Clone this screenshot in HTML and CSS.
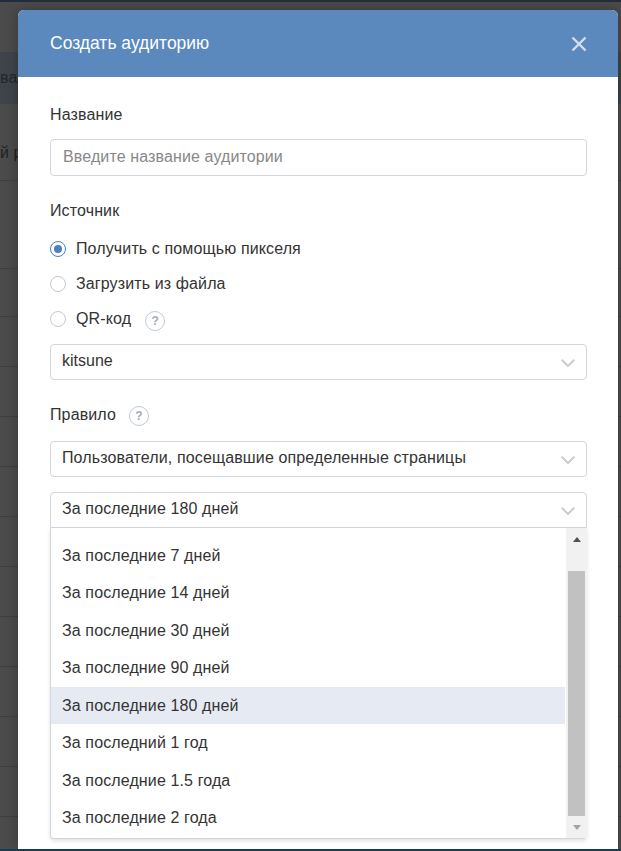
FILE: index.html
```html
<!DOCTYPE html>
<html lang="ru">
<head>
<meta charset="utf-8">
<title>Создать аудиторию</title>
<link rel="stylesheet" href="styles.css">
</head>
<body>
<div class="backdrop">
  <div class="bg-head"><span class="bg-head-text">ва</span></div>
  <div class="bg-row bg-row-first"><span>й р</span></div>
  <div class="bg-row bg-row-a"></div>
  <div class="bg-row bg-row-b"></div>
  <div class="bg-row"></div><div class="bg-row"></div><div class="bg-row"></div>
  <div class="bg-row"></div><div class="bg-row"></div><div class="bg-row"></div><div class="bg-row"></div>
  <div class="bg-row"></div><div class="bg-row"></div><div class="bg-row"></div>
</div>
<section class="modal">
  <header class="modal-head">
    <h1 class="modal-title">Создать аудиторию</h1>
    <svg class="close" width="16" height="16" viewBox="0 0 16 16"><path d="M1.5 1.5 14.5 14.5M14.5 1.5 1.5 14.5" stroke="#d5dfec" stroke-width="2.4" fill="none"/></svg>
  </header>
  <div class="modal-body">
    <div class="label first">Название</div>
    <div class="field input"><span class="placeholder">Введите название аудитории</span></div>
    <div class="label source">Источник</div>
    <div class="radios">
      <div class="radio-row"><span class="radio on"></span><span>Получить с помощью пикселя</span></div>
      <div class="radio-row"><span class="radio"></span><span>Загрузить из файла</span></div>
      <div class="radio-row"><span class="radio"></span><span>QR-код</span><span class="help">?</span></div>
    </div>
    <div class="field select"><span class="latin">kitsune</span>
      <svg class="chev" width="14" height="8" viewBox="0 0 14 8"><path d="M.7 .8 7 7 13.3 .8" stroke="#c9ccd1" stroke-width="2" fill="none"/></svg>
    </div>
    <div class="label rule"><span>Правило</span><span class="help">?</span></div>
    <div class="field select"><span>Пользователи, посещавшие определенные страницы</span>
      <svg class="chev" width="14" height="8" viewBox="0 0 14 8"><path d="M.7 .8 7 7 13.3 .8" stroke="#c9ccd1" stroke-width="2" fill="none"/></svg>
    </div>
    <div class="dropdown-wrap">
      <div class="field select open"><span>За последние 180 дней</span>
        <svg class="chev" width="14" height="8" viewBox="0 0 14 8"><path d="M.7 .8 7 7 13.3 .8" stroke="#c9ccd1" stroke-width="2" fill="none"/></svg>
      </div>
      <div class="menu">
        <ul class="options">
          <li>За последние 7 дней</li>
          <li>За последние 14 дней</li>
          <li>За последние 30 дней</li>
          <li>За последние 90 дней</li>
          <li class="active">За последние 180 дней</li>
          <li>За последний 1 год</li>
          <li>За последние 1.5 года</li>
          <li>За последние 2 года</li>
        </ul>
        <div class="scrollbar">
          <div class="sb-btn sb-up"><span class="arrow-up"></span></div>
          <div class="sb-track"><div class="sb-thumb"></div></div>
          <div class="sb-btn"><span class="arrow-down"></span></div>
        </div>
      </div>
    </div>
  </div>
</section>
</body>
</html>
```
FILE: styles.css
```css
* { box-sizing: border-box; }
html, body { margin: 0; height: 851px; overflow: hidden; }
body {
  position: relative;
  width: 621px;
  background: #4b4b4b;
  font-family: "Liberation Sans", Arial, sans-serif;
  font-size: 16px;
  letter-spacing: .12px;
  color: #333;
  border-top: 2px solid #1f2d3d;
  border-bottom: 2px solid #1d3a4f;
}
.backdrop { height: 100%; padding-top: 50px; color: #222; overflow: hidden; }
.bg-head { height: 52px; background: #3f444a; line-height: 52px; color: #23262c; }
.bg-row { height: 50px; border-bottom: 1px solid #3f3f3f; }
.bg-row-first { height: 77px; line-height: 98px; }
.bg-row-a { height: 88px; }
.bg-row-b { height: 48px; }
.modal {
  position: absolute;
  left: 18px;
  top: 8px;
  width: 600px;
  height: 839px;
  background: #fff;
  border-radius: 6px 6px 0 0;
  box-shadow: 0 0 14px rgba(0,0,0,.28);
}
.modal-head {
  height: 67px;
  background: #5b88bd;
  border-radius: 6px 6px 0 0;
  display: flex;
  align-items: center;
  justify-content: space-between;
  padding: 0 31px 0 32px;
}
.modal-title { margin: 0; font-size: 17.5px; font-weight: 400; color: #fff; letter-spacing: 0; }
.modal-body { padding: 0 32px; }
.label { line-height: 20px; }
.label.first { margin-top: 28px; }
.label.source { margin-top: 25px; }
.label.rule { margin-top: 25px; height: 20px; display: flex; align-items: center; }
.field {
  display: flex;
  align-items: center;
  justify-content: space-between;
  width: 537px;
  border: 1px solid #d3d6dd;
  border-radius: 4px;
  padding: 0 11px 2px;
  background: #fff;
}
.input { height: 37px; margin-top: 14px; padding: 0 12px 2px; }
.placeholder { color: #888; }
.select { height: 36px; }
.latin { letter-spacing: 0; }
.radios { margin-top: 10px; margin-bottom: 8px; }
.radio-row { height: 35px; display: flex; align-items: center; }
.radio {
  width: 16px; height: 16px; margin-right: 10px;
  border: 1px solid #c3c9d3; border-radius: 50%; background: #fff;
}
.radio.on { border-color: #4a80c4; position: relative; }
.radio.on::after {
  content: ""; position: absolute; left: 3px; top: 3px;
  width: 8px; height: 8px; border-radius: 50%; background: #4a80c4;
}
.help {
  width: 20px; height: 20px; margin-left: 14px;
  border: 1px solid #bccadb; border-radius: 50%;
  display: flex; align-items: center; justify-content: center;
  font-size: 12px; font-weight: 700; color: #a3abb5; letter-spacing: 0;
}
.radio-row .help { margin-top: 4px; }
.label.rule .help { margin-top: 2px; margin-left: 13px; }
.label.rule + .select { margin-top: 16px; }
.chev { margin-top: 4px; }
.dropdown-wrap { position: relative; margin-top: 15px; }
.select.open { border-radius: 4px 4px 0 0; }
.menu {
  position: absolute;
  left: 0; top: 36px;
  width: 537px; height: 311px;
  background: #fff;
  border: 1px solid #d3d6dd;
  border-top: 0;
  border-right: 0;
  border-radius: 0 0 4px 4px;
  box-shadow: 0 2px 4px rgba(0,0,0,.12);
  display: flex;
}
.options { list-style: none; margin: 0 1px 0 0; padding: 8.9px 0 0; flex: 1; }
.options li { height: 37.5px; line-height: 37.5px; padding: 0 11px; }
.options li.active { background: #e6ebf3; }
.scrollbar { width: 21px; background: #f1f1f1; display: flex; flex-direction: column; }
.sb-btn { height: 22px; flex: none; display: flex; align-items: center; justify-content: center; }
.sb-up { height: 43px; align-items: flex-start; padding-top: 9px; }
.sb-track { flex: 1; padding: 0 2px; }
.sb-thumb { height: 100%; background: #c1c1c1; }
.arrow-up { width: 0; height: 0; border: 4.5px solid transparent; border-top: 0; border-bottom: 5px solid #505050; }
.arrow-down { width: 0; height: 0; border: 4.5px solid transparent; border-bottom: 0; border-top: 5px solid #a3a3a3; }
```
